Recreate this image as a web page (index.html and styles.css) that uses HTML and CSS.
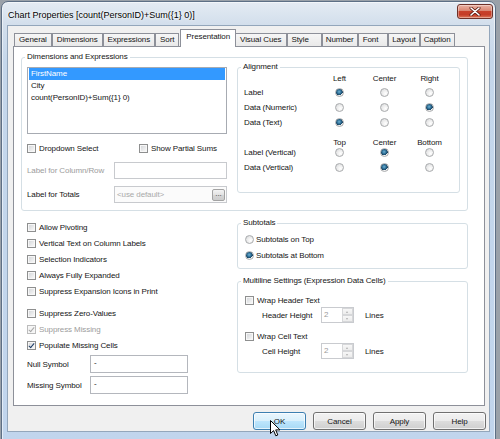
FILE: index.html
```html
<!DOCTYPE html>
<html lang="en">
<head>
<meta charset="utf-8">
<title>Chart Properties</title>
<link rel="stylesheet" href="styles.css">
</head>
<body>
<div class="window">
  <div class="titlebar">
    <span class="title">Chart Properties [count(PersonID)+Sum({1} 0)]</span>
    <span class="close">
      <svg width="12" height="9" viewBox="0 0 12 9">
        <path d="M2 1 L10 8 M10 1 L2 8" stroke="#5b1d14" stroke-width="3" stroke-linecap="round"/>
        <path d="M2 1 L10 8 M10 1 L2 8" stroke="#fff" stroke-width="1.6" stroke-linecap="round"/>
      </svg>
    </span>
  </div>

  <div class="dialog">
    <div class="tabs">
      <span class="tab">General</span>
      <span class="tab">Dimensions</span>
      <span class="tab">Expressions</span>
      <span class="tab">Sort</span>
      <span class="tab tab-active">Presentation</span>
      <span class="tab">Visual Cues</span>
      <span class="tab tab-wide">Style</span>
      <span class="tab tab-tight">Number</span>
      <span class="tab tab-font">Font</span>
      <span class="tab tab-tight">Layout</span>
      <span class="tab tab-tight">Caption</span>
    </div>

    <div class="panel">
      <fieldset class="group group-dims">
        <legend>Dimensions and Expressions</legend>
        <div class="dims-body">
          <div class="dims-left">
            <ul class="listbox">
              <li class="sel">FirstName</li>
              <li>City</li>
              <li>count(PersonID)+Sum({1} 0)</li>
            </ul>
            <div class="check-row">
              <label class="check check-first"><span class="box"></span>Dropdown Select</label>
              <label class="check"><span class="box"></span>Show Partial Sums</label>
            </div>
            <div class="field-row">
              <span class="field-label muted">Label for Column/Row</span>
              <span class="input"></span>
            </div>
            <div class="field-row field-row-totals">
              <span class="field-label">Label for Totals</span>
              <span class="input input-totals">
                <span class="placeholder">&lt;use default&gt;</span>
                <span class="dots">...</span>
              </span>
            </div>
          </div>

          <fieldset class="group group-align">
            <legend>Alignment</legend>
            <div class="align-grid">
              <span></span><span class="hd">Left</span><span class="hd">Center</span><span class="hd">Right</span>
              <span class="rl">Label</span><span class="radio on"></span><span class="radio"></span><span class="radio"></span>
              <span class="rl">Data (Numeric)</span><span class="radio"></span><span class="radio"></span><span class="radio on"></span>
              <span class="rl">Data (Text)</span><span class="radio on"></span><span class="radio"></span><span class="radio"></span>
              <span class="gap"></span><span class="hd gap">Top</span><span class="hd gap">Center</span><span class="hd gap">Bottom</span>
              <span class="rl">Label (Vertical)</span><span class="radio"></span><span class="radio on"></span><span class="radio"></span>
              <span class="rl">Data (Vertical)</span><span class="radio"></span><span class="radio on"></span><span class="radio"></span>
            </div>
          </fieldset>
        </div>
      </fieldset>

      <div class="lower">
        <div class="lower-left">
          <label class="check opt"><span class="box"></span>Allow Pivoting</label>
          <label class="check opt"><span class="box"></span>Vertical Text on Column Labels</label>
          <label class="check opt"><span class="box"></span>Selection Indicators</label>
          <label class="check opt"><span class="box"></span>Always Fully Expanded</label>
          <label class="check opt"><span class="box"></span>Suppress Expansion Icons in Print</label>
          <label class="check opt opt-spaced"><span class="box"></span>Suppress Zero-Values</label>
          <label class="check opt muted"><span class="box box-off checked"></span>Suppress Missing</label>
          <label class="check opt"><span class="box checked"></span>Populate Missing Cells</label>
          <div class="sym-row">
            <span class="sym-label">Null Symbol</span>
            <span class="sym-input">-</span>
          </div>
          <div class="sym-row sym-row-2">
            <span class="sym-label">Missing Symbol</span>
            <span class="sym-input">-</span>
          </div>
        </div>

        <div class="lower-right">
          <fieldset class="group group-side">
            <legend>Subtotals</legend>
            <div class="subtotals">
              <label class="opt-radio"><span class="radio"></span>Subtotals on Top</label>
              <label class="opt-radio"><span class="radio on"></span>Subtotals at Bottom</label>
            </div>
          </fieldset>

          <fieldset class="group group-side group-multi">
            <legend>Multiline Settings (Expression Data Cells)</legend>
            <div class="multiline">
              <label class="check wrap-row"><span class="box"></span>Wrap Header Text</label>
              <div class="spin-row">
                <span class="spin-label">Header Height</span>
                <span class="spin"><span class="spin-val">2</span><span class="spin-btns"><span class="up"></span><span class="down"></span></span></span>
                <span class="lines">Lines</span>
              </div>
              <label class="check wrap-row wrap-row-2"><span class="box"></span>Wrap Cell Text</label>
              <div class="spin-row">
                <span class="spin-label">Cell Height</span>
                <span class="spin"><span class="spin-val">2</span><span class="spin-btns"><span class="up"></span><span class="down"></span></span></span>
                <span class="lines">Lines</span>
              </div>
            </div>
          </fieldset>
        </div>
      </div>
    </div>

    <div class="buttons">
      <button class="btn btn-ok">OK</button>
      <button class="btn">Cancel</button>
      <button class="btn">Apply</button>
      <button class="btn">Help</button>
    </div>
  </div>

  <svg class="cursor" width="11" height="17" viewBox="0 0 11 17">
    <path d="M0.5 0.5 L0.5 13.5 L3.6 10.6 L5.8 15.8 L7.8 15 L5.7 9.9 L10 9.9 Z" fill="#fff" stroke="#000" stroke-width="1" stroke-linejoin="round"/>
  </svg>
</div>
</body>
</html>
```

FILE: styles.css
```css
* { box-sizing: border-box; }

html, body { margin: 0; }

body {
  width: 500px;
  height: 439px;
  overflow: hidden;
  background: #9aa1a9;
  font-family: "Liberation Sans", Arial, sans-serif;
  font-size: 8px;
  letter-spacing: -0.1px;
  color: #151515;
}

/* window frame */
.window {
  position: relative;
  margin: 1px 0 0 1px;
  width: 495px;
  height: 445px;
  padding: 0 5px;
  border: 1px solid #5d6f85;
  border-radius: 7px 7px 0 0;
  background: linear-gradient(#e4ebf3 0, #d3dfec 22px, #c5d7eb 60px, #c1d5ed 100%);
  box-shadow: inset 0 0 0 1px rgba(255, 255, 255, 0.55);
}

.titlebar {
  height: 23px;
  display: flex;
  align-items: flex-start;
}

.title {
  padding: 7px 0 0 1px;
  font-size: 9px;
  line-height: 12px;
  letter-spacing: 0;
  color: #000;
  text-shadow: 0 0 4px #fff, 0 0 2px #fff;
}

.close {
  margin: 2px -3px 0 auto;
  width: 36px;
  height: 15px;
  display: flex;
  align-items: center;
  justify-content: center;
  border: 1px solid #6e3128;
  border-radius: 3px;
  background: linear-gradient(#eab2a3 0, #d98672 45%, #c8402a 50%, #c43c26 75%, #de7a5c 100%);
  box-shadow: inset 0 0 0 1px rgba(255, 255, 255, 0.35);
}

/* dialog body */
.dialog {
  height: 407px;
  display: flex;
  flex-direction: column;
  padding: 3px 3px 0 5px;
  border: 1px solid #93a6bb;
  background: #f0f0f0;
}

.tabs {
  position: relative;
  z-index: 1;
  height: 17px;
  display: flex;
  align-items: flex-end;
  margin-left: 1px;
}

.tab {
  height: 13px;
  padding: 0 4px;
  line-height: 12px;
  white-space: nowrap;
  border: 1px solid #8d9099;
  border-bottom: 0;
  background: linear-gradient(#f6f6f6, #e9e9e9);
}

.tab-wide { padding-right: 12px; }

.tab-font { padding-right: 9px; }

.tab-tight { padding: 0 3px; }

.tab-active {
  height: 18px;
  margin: 0 -1px -1px 1px;
  padding: 1px 5px 0;
  background: #fff;
}

.panel {
  width: 472px;
  height: 360px;
  padding: 5px 0 0 7px;
  border: 1px solid #8d9099;
  background: #fff;
}

/* group boxes */
.group {
  margin: 0;
  padding: 0;
  min-width: 0;
  border: 1px solid #d5dfe5;
  border-radius: 3px;
}

.group legend {
  margin-left: 3px;
  padding: 0 2px;
  line-height: 10px;
}

.group-dims { width: 447px; }

.dims-body {
  display: flex;
  align-items: flex-start;
  padding: 0 7px 7px 5px;
}

.dims-left {
  width: 200px;
  margin-right: 10px;
  padding-top: 5px;
}

.listbox {
  height: 67px;
  margin: 0;
  padding: 0;
  list-style: none;
  border: 1px solid #a7abb2;
  background: #fff;
}

.listbox li {
  height: 12px;
  line-height: 12px;
  margin: 0 1px;
  padding-left: 2px;
}

.listbox .sel {
  background: #3399ff;
  color: #fff;
}

/* checkboxes */
.check {
  display: flex;
  align-items: center;
  gap: 3px;
  white-space: nowrap;
}

.box {
  flex: none;
  width: 9px;
  height: 9px;
  border: 1px solid #8e8f8f;
  background: linear-gradient(135deg, #cfd2d6, #f4f4f4 80%);
  box-shadow: inset 0 0 0 1px #f7f7f7;
  position: relative;
}

.box-off {
  border-color: #bcbcbc;
  background: #f4f4f4;
}

.box.checked::after {
  content: "";
  position: absolute;
  left: 2px;
  top: 0;
  width: 2px;
  height: 5px;
  border: solid #1c3b66;
  border-width: 0 1.5px 1.5px 0;
  transform: rotate(40deg);
}

.box-off.checked::after { border-color: #a6a6a6; }

.check-row {
  display: flex;
  align-items: center;
  height: 16px;
  margin-top: 6px;
}

.check-first { width: 112px; }

.field-row {
  display: flex;
  align-items: center;
  height: 17px;
  margin-top: 6px;
}

.field-row-totals { margin-top: 7px; }

.field-label { width: 87px; white-space: nowrap; }

.muted { color: #9c9c9c; }

.input {
  width: 113px;
  height: 17px;
  display: flex;
  align-items: center;
  border: 1px solid #c8cace;
  background: #fff;
}

.input-totals {
  justify-content: space-between;
  padding: 0 1px 0 2px;
  background: #fbfbfb;
}

.placeholder { color: #a9a9a9; }

.dots {
  width: 13px;
  height: 12px;
  line-height: 8px;
  text-align: center;
  color: #444;
  border: 1px solid #a3a3a3;
  border-radius: 2px;
  background: linear-gradient(#f3f3f3, #e2e2e2 50%, #d6d6d6 50%, #cdcdcd);
}

/* radio buttons */
.radio {
  flex: none;
  width: 9px;
  height: 9px;
  border: 1px solid #a9abad;
  border-radius: 50%;
  background: radial-gradient(circle at 65% 65%, #ffffff 0, #eeeeee 45%, #d3d5d8 100%);
}

.radio.on {
  background:
    radial-gradient(circle at 45% 40%, #6fb3d6 0, #2f6f96 35%, #163f5c 60%, transparent 62%),
    radial-gradient(circle at 65% 65%, #ffffff 0, #eeeeee 45%, #d3d5d8 100%);
}

/* alignment grid */
.group-align { width: 223px; }

.align-grid {
  display: grid;
  grid-template-columns: 73px 45px 45px 45px;
  grid-template-rows: 13px;
  grid-auto-rows: 15px;
  align-items: center;
  justify-items: center;
  padding: 0 0 17px 6px;
}

.align-grid .rl {
  justify-self: start;
  white-space: nowrap;
}

.align-grid .gap {
  height: 25px;
  padding-top: 10px;
  line-height: 15px;
}

/* lower area */
.lower {
  display: flex;
  margin-top: 7px;
}

.lower-left {
  width: 216px;
  padding: 1px 0 0 6px;
}

.opt { height: 16px; }

.opt-spaced { margin-top: 6px; }

.sym-row {
  display: flex;
  align-items: center;
  height: 18px;
  margin-top: 2px;
}

.sym-row-2 { margin-top: 3px; }

.sym-label { width: 63px; white-space: nowrap; }

.sym-input {
  width: 98px;
  height: 18px;
  padding: 1px 0 0 3px;
  line-height: 12px;
  border: 1px solid #b4b7bd;
  background: #fff;
}

.lower-right { width: 231px; }

.group-side { width: 231px; }

.subtotals { padding: 3px 0 5px 7px; }

.opt-radio {
  display: flex;
  align-items: center;
  gap: 2px;
  height: 16px;
}

.group-multi { margin-top: 7px; }

.multiline { padding: 7px 0 13px 7px; }

.wrap-row { height: 14px; }

.wrap-row-2 { margin-top: 6px; }

.spin-row {
  display: flex;
  align-items: center;
  height: 16px;
  padding-left: 17px;
}

.spin-label { width: 59px; white-space: nowrap; }

.spin {
  width: 33px;
  height: 16px;
  display: flex;
  border: 1px solid #c9cbcf;
  background: #fff;
}

.spin-val {
  flex: 1;
  padding-left: 2px;
  line-height: 14px;
  color: #9a9a9a;
}

.spin-btns {
  width: 11px;
  display: flex;
  flex-direction: column;
}

.spin-btns span {
  flex: 1;
  position: relative;
  border: 1px solid #d6d7d9;
  background: linear-gradient(#f7f7f7, #ececec);
}

.spin-btns .up::after,
.spin-btns .down::after {
  content: "";
  position: absolute;
  left: 3px;
  top: 2px;
  border-left: 1.5px solid transparent;
  border-right: 1.5px solid transparent;
}

.spin-btns .up::after { border-bottom: 2px solid #b0b0b0; }
.spin-btns .down::after { border-top: 2px solid #b0b0b0; }

.lines { margin-left: 11px; }

/* command buttons */
.buttons {
  display: flex;
  justify-content: flex-end;
  gap: 7px;
  margin-top: 6px;
}

.btn {
  width: 53px;
  height: 18px;
  padding: 0;
  font: inherit;
  letter-spacing: inherit;
  color: #151515;
  border: 1px solid #707070;
  border-radius: 3px;
  background: linear-gradient(#f2f2f2, #ebebeb 50%, #dddddd 50%, #cfcfcf);
  box-shadow: inset 0 0 0 1px rgba(255, 255, 255, 0.7);
}

.btn-ok {
  border-color: #3c7fb1;
  background: linear-gradient(#eaf6fd, #d9f0fc 50%, #bee6fd 50%, #a7d9f5);
}

.cursor {
  position: absolute;
  left: 268px;
  top: 418px;
}
```
